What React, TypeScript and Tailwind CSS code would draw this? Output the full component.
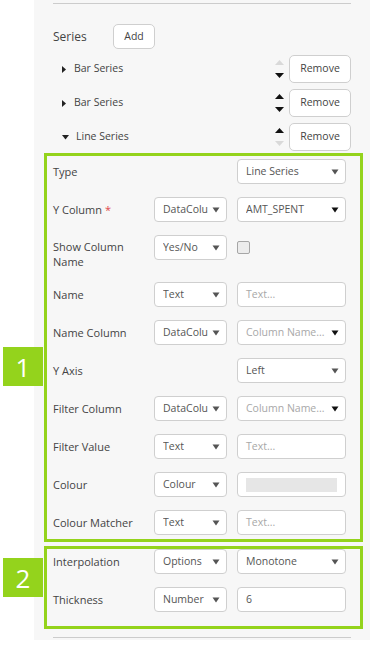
import type { ReactNode } from "react";

const GREEN = "border-[#94d31c]";

function Caret({ dark }: { dark?: boolean }) {
  return (
    <svg width="8" height="6" viewBox="0 0 8 6" className="shrink-0">
      <path d="M0.5 0.5 L7.5 0.5 L4 5.5 Z" fill={dark ? "#111" : "#555"} />
    </svg>
  );
}

function Select({ value, wide, placeholder, dark }: { value: string; wide?: boolean; placeholder?: boolean; dark?: boolean }) {
  return (
    <div
      className={`${wide ? "w-[109px]" : "w-[73px]"} h-[25px] shrink-0 flex items-center border border-[#cfcfcf] rounded-[4px] bg-white pl-[8px] pr-[6px]`}
    >
      <span className={`flex-1 overflow-hidden whitespace-nowrap ${placeholder ? "text-[#a8a8a8]" : "text-[#555]"}`}>
        {value}
      </span>
      <span className="ml-[1px]">
        <Caret dark={dark} />
      </span>
    </div>
  );
}

function TextInput({ value, placeholder }: { value: string; placeholder?: boolean }) {
  return (
    <div className="w-[109px] h-[25px] shrink-0 flex items-center border border-[#cfcfcf] rounded-[4px] bg-white px-[8px]">
      <span className={placeholder ? "text-[#a8a8a8]" : "text-[#555]"}>{value}</span>
    </div>
  );
}

function ColourInput() {
  return (
    <div className="w-[109px] h-[25px] shrink-0 flex items-center border border-[#cfcfcf] rounded-[4px] bg-white px-[8px]">
      <div className="w-full h-[14px] bg-[#e6e6e6]" />
    </div>
  );
}

function Row({ label, left, right, last, tight }: { label: ReactNode; left?: ReactNode; right?: ReactNode; last?: boolean; tight?: boolean }) {
  return (
    <div className={`flex items-start ${last ? "" : "mb-[13px]"}`}>
      <div className={`w-[92px] mr-[9px] ${tight ? "pt-[4px]" : "pt-[5px]"} leading-[15px] text-[11px] text-[#444]`}>{label}</div>
      <div className="w-[73px] mr-[10px] shrink-0">{left}</div>
      {right}
    </div>
  );
}

function Arrows({ up, down }: { up: boolean; down: boolean }) {
  return (
    <div className="flex flex-col items-center justify-center gap-[8px] w-[9px] mr-[5px]">
      <svg width="9" height="5" viewBox="0 0 9 5">
        <path d="M0 5 L9 5 L4.5 0 Z" fill={up ? "#111" : "#d9d9d9"} />
      </svg>
      <svg width="9" height="5" viewBox="0 0 9 5">
        <path d="M0 0 L9 0 L4.5 5 Z" fill={down ? "#111" : "#d9d9d9"} />
      </svg>
    </div>
  );
}

function SeriesItem({ name, open, up, down }: { name: string; open?: boolean; up: boolean; down: boolean }) {
  return (
    <div className="flex items-center h-[28px] mb-[6px]">
      <div className="flex items-center pl-[9px] flex-1 text-[#444]">
        {open ? (
          <svg width="7" height="5" viewBox="0 0 7 5" className="mr-[7px]">
            <path d="M0 0 L7 0 L3.5 4.5 Z" fill="#222" />
          </svg>
        ) : (
          <svg width="4" height="7" viewBox="0 0 4 7" className="mr-[8px]">
            <path d="M0 0 L4 3.5 L0 7 Z" fill="#222" />
          </svg>
        )}
        <span>{name}</span>
      </div>
      <Arrows up={up} down={down} />
      <button className="w-[62px] h-[28px] border border-[#cfcfcf] rounded-[5px] bg-white text-[#444]">Remove</button>
    </div>
  );
}

function Badge({ n }: { n: string }) {
  return (
    <div className="w-[40px] h-[39px] bg-[#94d31c] text-white text-[26px] leading-none flex items-center justify-center">
      {n}
    </div>
  );
}

export default function App() {
  return (
    <div
      className="w-[370px] h-[661px] bg-white text-[10.5px] relative"
      style={{ fontFamily: '"Open Sans", "Liberation Sans", sans-serif' }}
    >
      <div className="ml-[34px] h-[640px] bg-[#f7f7f7] pt-[3px]">
        <div className="mx-[19px] border-t border-[#cccccc]" />

        <div className="mx-[19px] mt-[20px] flex items-center">
          <span className="text-[12px] text-[#444] w-[60px]">Series</span>
          <button className="w-[42px] h-[25px] border border-[#cfcfcf] rounded-[5px] bg-white text-[#444]">Add</button>
        </div>

        <div className="mx-[19px] mt-[6px]">
          <SeriesItem name="Bar Series" up={false} down />
          <SeriesItem name="Bar Series" up down />
          <SeriesItem name="Line Series" open up down={false} />
        </div>

        {/* group 1 */}
        <div className={`relative ml-[10px] mr-[7px] -mt-[4px] border-[3px] ${GREEN} pt-[3px] pb-[4px] pl-[6px]`}>
          <div className="absolute -left-[44px] top-[191px]">
            <Badge n="1" />
          </div>
          <Row label="Type" right={<Select value="Line Series" wide />} left={null} />
          <Row
            label={
              <>
                Y Column <span className="text-[#e0474c]">*</span>
              </>
            }
            left={<Select value="DataColu" />}
            right={<Select value="AMT_SPENT" wide dark />}
          />
          <Row
            label="Show Column Name"
            tight
            left={<Select value="Yes/No" />}
            right={
              <div className="mt-[6px] w-[13px] h-[13px] rounded-[2px] border border-[#a6a6a6] bg-[#ececec]" />
            }
          />
          <Row label="Name" left={<Select value="Text" />} right={<TextInput value="Text..." placeholder />} />
          <Row
            label="Name Column"
            left={<Select value="DataColu" />}
            right={<Select value="Column Name..." wide placeholder dark />}
          />
          <Row label="Y Axis" right={<Select value="Left" wide />} left={null} />
          <Row
            label="Filter Column"
            left={<Select value="DataColu" />}
            right={<Select value="Column Name..." wide placeholder dark />}
          />
          <Row label="Filter Value" left={<Select value="Text" />} right={<TextInput value="Text..." placeholder />} />
          <Row label="Colour" left={<Select value="Colour" />} right={<ColourInput />} />
          <Row label="Colour Matcher" left={<Select value="Text" />} right={<TextInput value="Text..." placeholder />} last />
        </div>

        {/* group 2 */}
        <div className={`relative ml-[10px] mr-[7px] mt-[4px] border-[3px] ${GREEN} pb-[14px] pl-[6px]`}>
          <div className="absolute -left-[44px] top-[9px]">
            <Badge n="2" />
          </div>
          <Row label="Interpolation" left={<Select value="Options" />} right={<Select value="Monotone" wide />} />
          <Row label="Thickness" left={<Select value="Number" />} right={<TextInput value="6" />} last />
        </div>

        <div className="mx-[19px] mt-[8px] border-t border-[#cccccc]" />
      </div>
    </div>
  );
}
